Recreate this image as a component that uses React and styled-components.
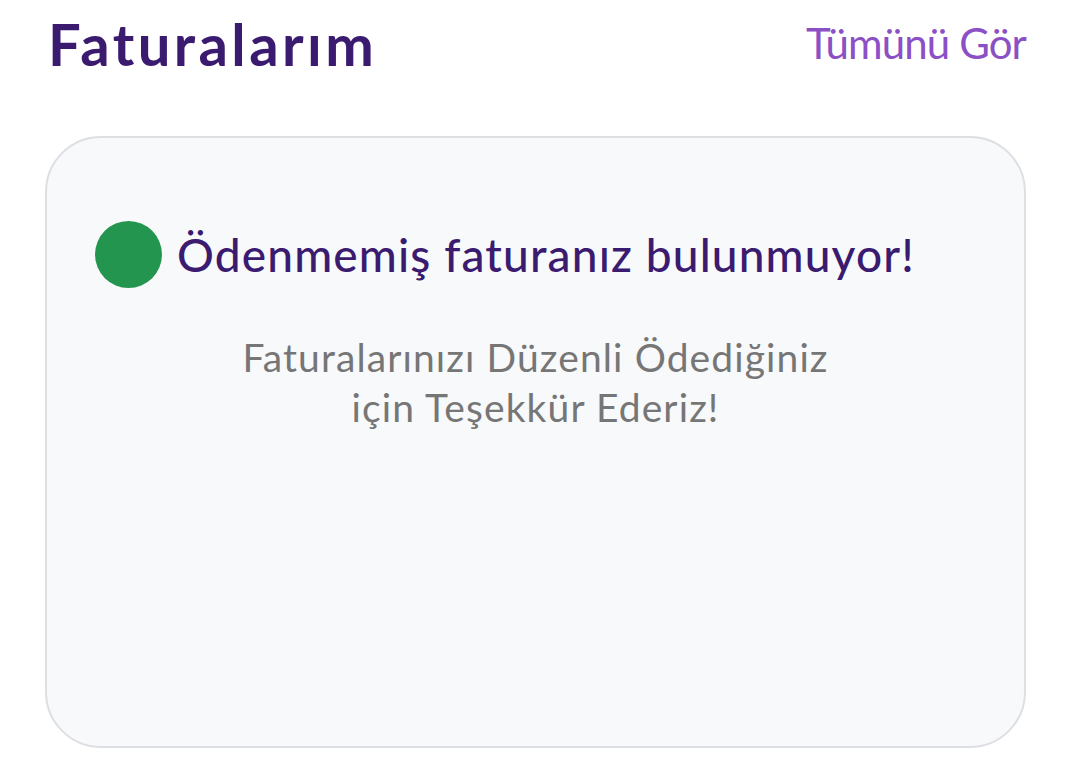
import React from 'react';
import styled, { createGlobalStyle } from 'styled-components';

const GlobalStyle = createGlobalStyle`
  body {
    margin: 0;
    background: #fff;
    font-family: "Lato", "Noto Sans", sans-serif;
  }
`;

const App = () => {
    return (
        <>
            <GlobalStyle />
            <Wrapper>
                <Header>
                    <h1>Faturalarım</h1>
                    <SeeAll type="button">Tümünü Gör</SeeAll>
                </Header>

                <Card>
                    <Status>
                        <Dot />
                        <h2>Ödenmemiş faturanız bulunmuyor!</h2>
                    </Status>
                    <p>
                        Faturalarınızı Düzenli Ödediğiniz
                        <br />
                        için Teşekkür Ederiz!
                    </p>
                </Card>
            </Wrapper>
        </>
    );
};

export default App;

const Wrapper = styled.div`
  width: 1072px;
  height: 768px;
  box-sizing: border-box;
  padding: 6px 46px 0 45px;
  display: flex;
  flex-direction: column;
  gap: 56px;
`;

const Header = styled.div`
  display: flex;
  align-items: center;
  justify-content: space-between;
  height: 74px;
  padding-left: 3px;

  h1 {
    margin: 0;
    color: #3b1b70;
    font-size: 58px;
    font-weight: 700;
    letter-spacing: 3.4px;
  }
`;

const SeeAll = styled.button`
  border: none;
  background: none;
  padding: 0;
  cursor: pointer;
  font-family: inherit;
  font-size: 42px;
  font-weight: 400;
  letter-spacing: -0.9px;
  color: #8b4fc6;
`;

const Card = styled.div`
  height: 612px;
  box-sizing: border-box;
  border: 2px solid #dddfe3;
  border-radius: 56px;
  background: #f8f9fa;
  padding: 83px 48px 0 48px;

  p {
    margin: 44px 0 0;
    text-align: center;
    color: #767676;
    font-size: 39px;
    line-height: 50px;
    letter-spacing: 1.1px;
  }
`;

const Status = styled.div`
  display: flex;
  align-items: center;
  gap: 15px;

  h2 {
    margin: 0;
    color: #3b1b70;
    font-size: 46px;
    font-weight: 500;
    letter-spacing: 1.15px;
  }
`;

const Dot = styled.span`
  width: 67px;
  height: 67px;
  border-radius: 50%;
  background: #24954f;
  flex-shrink: 0;
`;
